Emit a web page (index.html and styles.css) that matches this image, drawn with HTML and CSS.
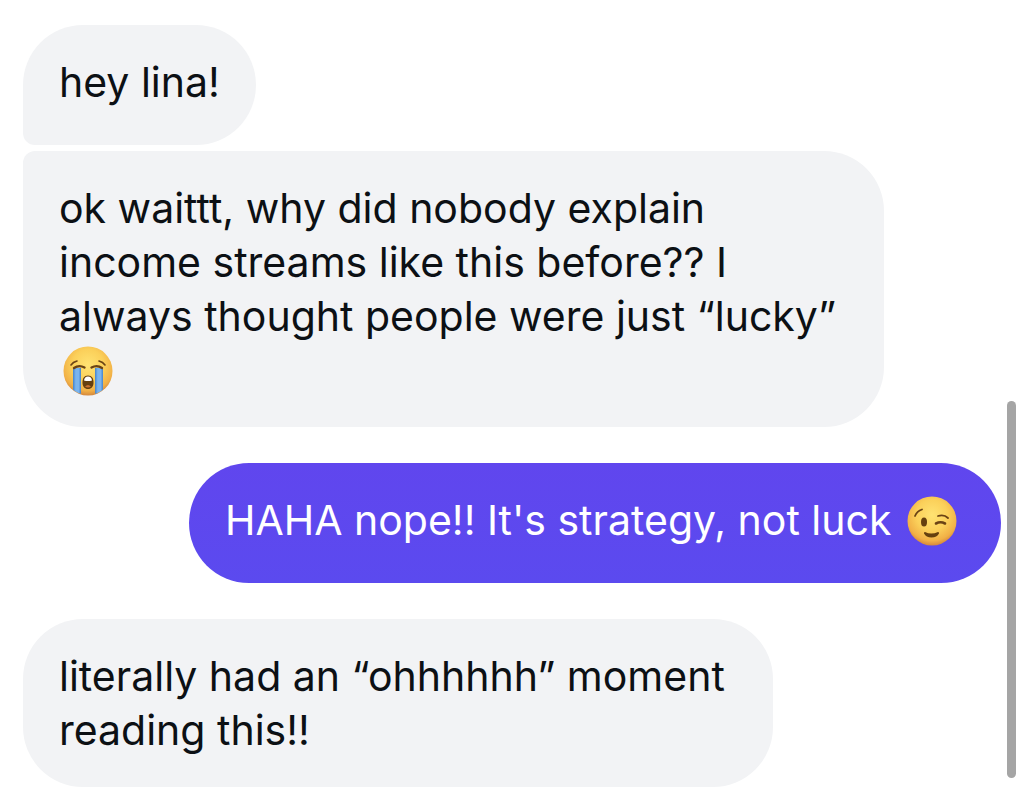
FILE: index.html
```html
<!DOCTYPE html>
<html lang="en">
<head>
    <meta charset="UTF-8">
    <meta name="viewport" content="width=device-width, initial-scale=1.0">
    <title>Messages</title>
    <link rel="stylesheet" href="styles.css">
</head>
<body>
    <main class="chat">
        <div class="group received">
            <p class="bubble">hey lina!</p>
            <p class="bubble multiline">ok waittt, why did nobody explain<br>income streams like this before?? I<br>always thought people were just “lucky”<br><svg class="emoji" viewBox="0 0 50 50" role="img" aria-label="loudly crying face">
                <defs>
                    <radialGradient id="face" cx="50%" cy="38%" r="64%">
                        <stop offset="0" stop-color="#ffe373"/>
                        <stop offset="0.5" stop-color="#fbd05a"/>
                        <stop offset="0.82" stop-color="#f1b046"/>
                        <stop offset="1" stop-color="#cf7f3a"/>
                    </radialGradient>
                    <linearGradient id="tears" x1="0" y1="0" x2="1" y2="0">
                        <stop offset="0" stop-color="#4383cc"/>
                        <stop offset="0.35" stop-color="#7ab4ee"/>
                        <stop offset="0.7" stop-color="#7ab4ee"/>
                        <stop offset="1" stop-color="#4383cc"/>
                    </linearGradient>
                    <clipPath id="head"><circle cx="25" cy="25" r="24"/></clipPath>
                </defs>
                <circle cx="25" cy="25" r="24.5" fill="url(#face)"/>
                <g clip-path="url(#head)" fill="url(#tears)">
                    <path d="M10 23q4-2 8-1v28h-8z"/>
                    <path d="M40 23q-4-2-8-1v28h8z"/>
                </g>
                <g fill="none" stroke="#6b4315" stroke-linecap="round">
                    <path d="M8 19q2-3 6-4" stroke-width="1.6"/>
                    <path d="M42 19q-2-3-6-4" stroke-width="1.6"/>
                    <path d="M11 22q5-3.5 10.500-.5" stroke-width="2.400"/>
                    <path d="M39 22q-5-3.5-10.500-.5" stroke-width="2.400"/>
                </g>
                <path d="M25 29.500c4 0 5.500 3 5.500 7s-2 6.500-5.500 6.500-5.500-2.500-5.500-6.500 1.500-7 5.500-7z" fill="#65400f"/>
                <path d="M21 34.500q.5-4 4-4t4 4q-4 1-8 0z" fill="#fff"/>
                <path d="M22 40.500q3-3 6 0-3 2-6 0z" fill="#c8702f"/>
            </svg></p>
        </div>

        <div class="group sent">
            <p class="bubble">HAHA nope!! It's strategy, not luck <svg class="emoji" viewBox="0 0 50 50" role="img" aria-label="winking face">
                <circle cx="25" cy="25" r="24.5" fill="url(#face)"/>
                <g fill="none" stroke="#6b4315" stroke-linecap="round">
                    <path d="M8 20q2-5 7-6.500" stroke-width="1.800"/>
                    <path d="M31 20q6-2 10 2" stroke-width="1.800"/>
                    <path d="M29 27.500q4.500-2.500 9 0" stroke-width="2.600"/>
                </g>
                <ellipse cx="17" cy="26" rx="3" ry="4.500" fill="#65400f"/>
                <path d="M18 36q6 3 13 0q1.500 0 1 1.500q-2 4-7.500 4t-7.500-4q-.5-1.500 1-1.500z" fill="#65400f"/>
            </svg></p>
        </div>

        <div class="group received">
            <p class="bubble multiline">literally had an “ohhhhhh” moment<br>reading this!!</p>
        </div>
    </main>

    <div class="scrollbar"></div>
</body>
</html>
```
FILE: styles.css
```css
body {
    margin: 0;
    background-color: #fff;
    font-family: Inter, "Liberation Sans", sans-serif;
    font-size: 41px;
    line-height: 54px;
    color: #0c1014;
}

.chat {
    display: flex;
    flex-direction: column;
    gap: 36px;
    padding: 25px 24px 24px 23px;
}

.group {
    display: flex;
    flex-direction: column;
    align-items: flex-start;
    gap: 6px;
}

.bubble {
    box-sizing: border-box;
    min-height: 120px;
    margin: 0;
    padding: 30px 36px;
    border-radius: 60px;
    background-color: #f2f3f5;
}

.multiline {
    padding-right: 48px;
}

/* stacked bubbles share tight corners on the inner side */
.received .bubble:not(:last-child) {
    border-bottom-left-radius: 12px;
}

.received .bubble:not(:first-child) {
    border-top-left-radius: 12px;
}

.sent {
    align-items: flex-end;
}

.sent .bubble {
    background: linear-gradient(#6046ee, #5b4aef);
    color: #fff;
}

.emoji {
    width: 50px;
    height: 50px;
    margin: 0 8px 0 4px;
    vertical-align: -11px;
}

.scrollbar {
    position: fixed;
    right: 9px;
    bottom: 33px;
    width: 9px;
    height: 377px;
    border-radius: 5px;
    background-color: #a5a5a5;
}
```
